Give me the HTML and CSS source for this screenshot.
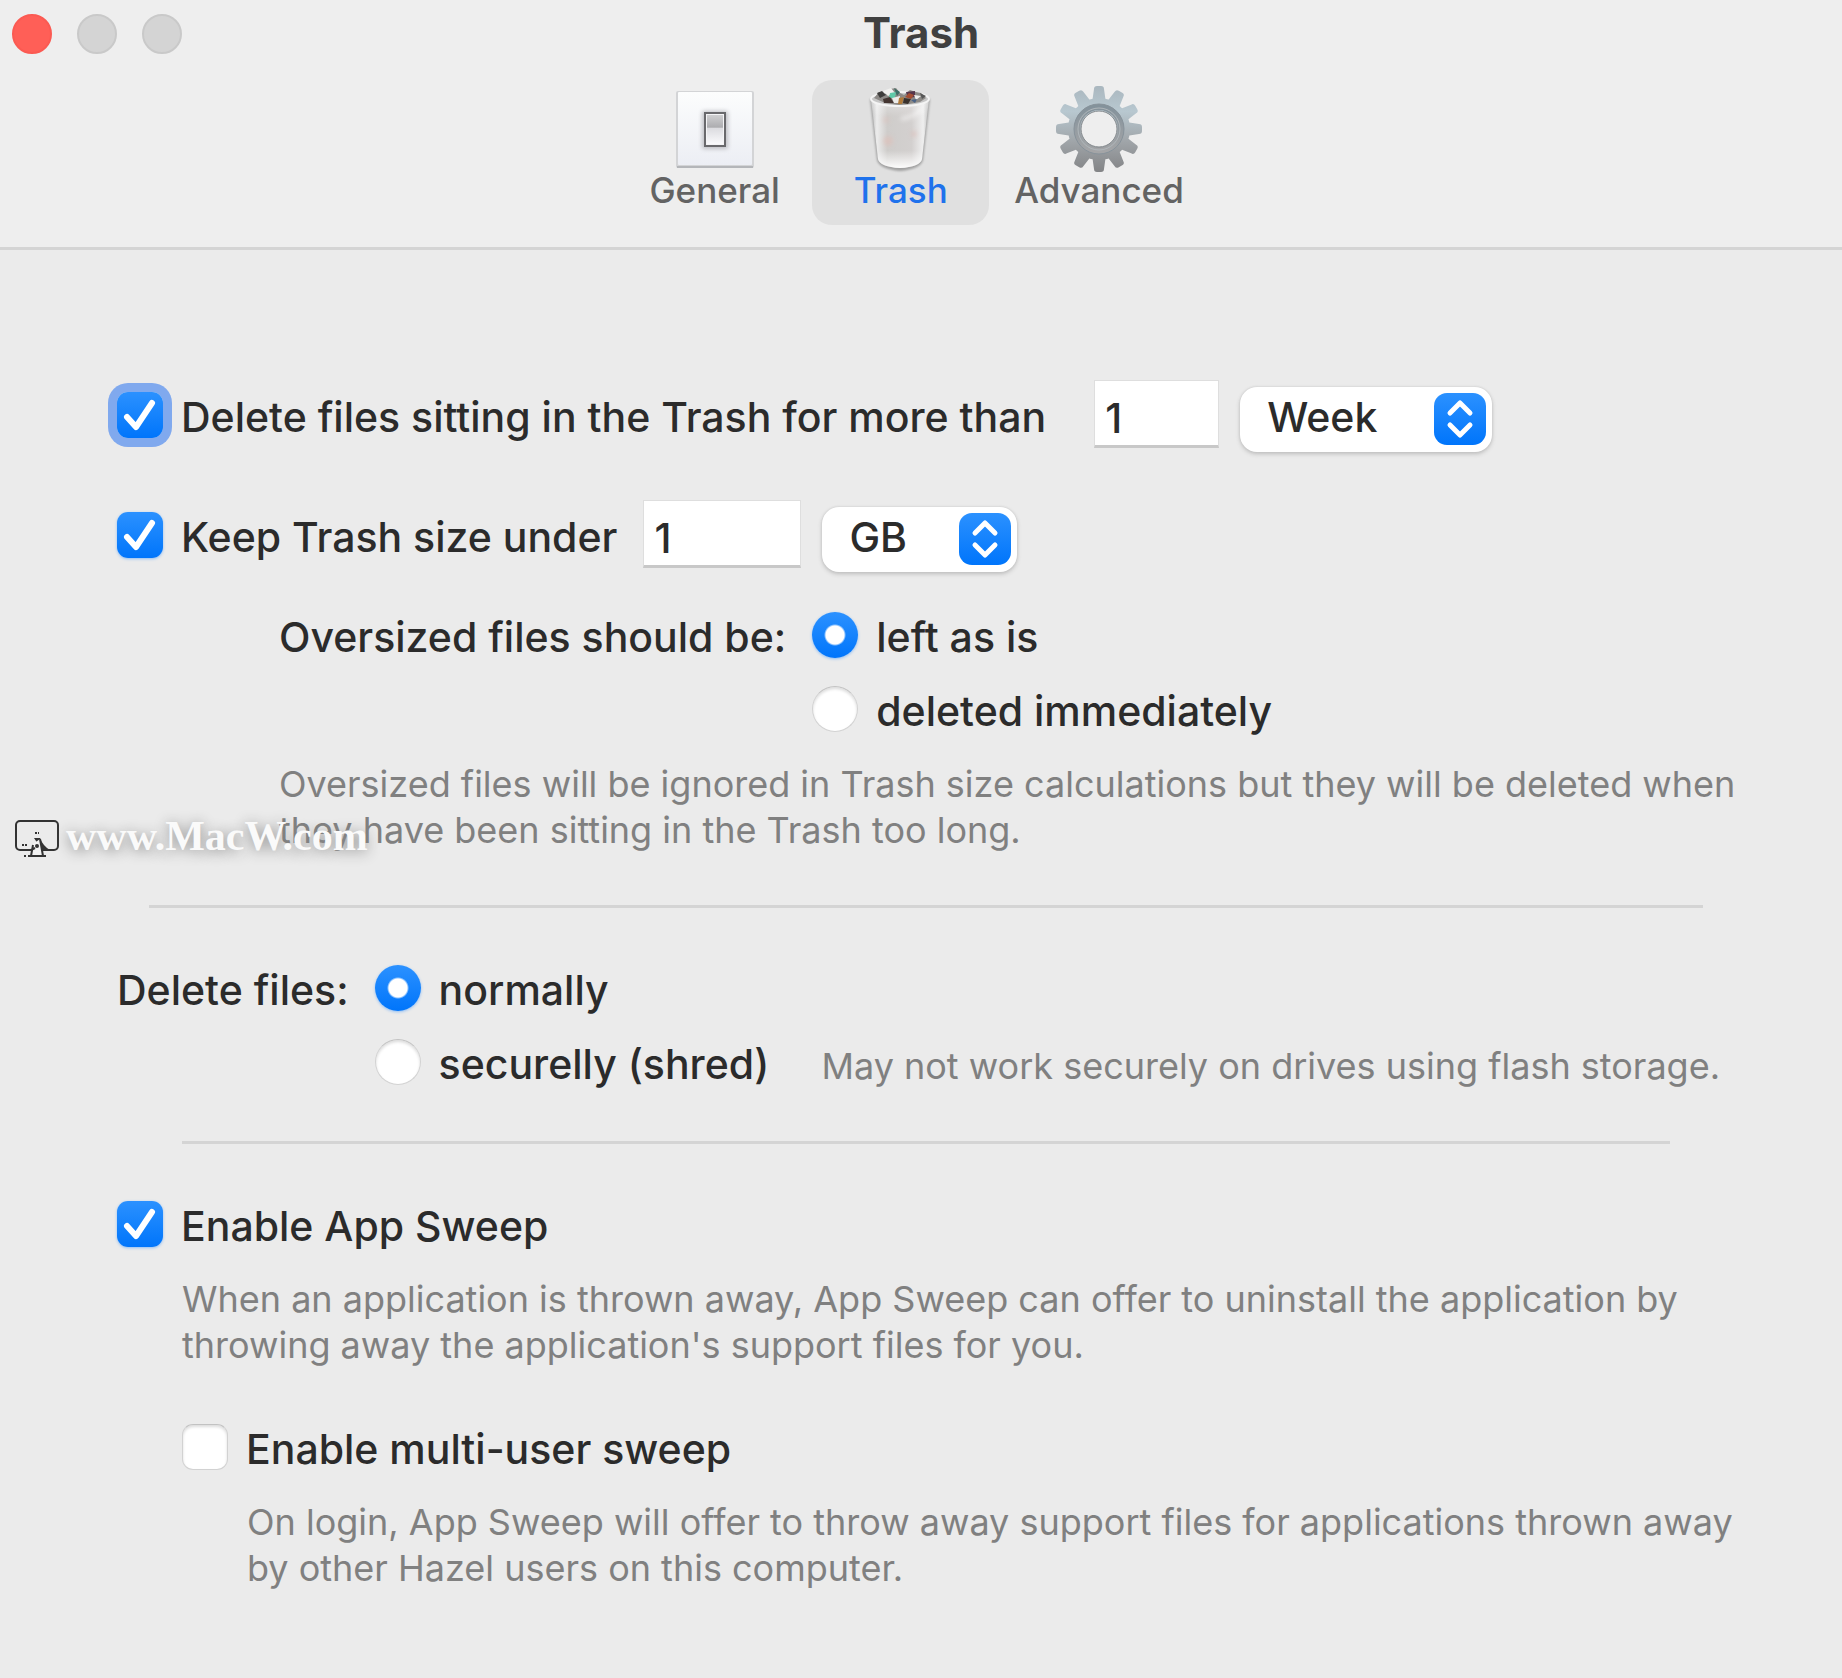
FILE: index.html
```
<!DOCTYPE html>
<html lang="en">
<head>
  <meta charset="UTF-8" />
  <meta name="viewport" content="width=device-width, initial-scale=1" />
  <title>Trash</title>
  <link rel="stylesheet" href="styles.css">
</head>

<body>
  <!-- Title bar and toolbar -->
  <header class="toolbar">
    <div class="window-buttons">
      <button type="button" class="light light-close" aria-label="Close"></button>
      <button type="button" class="light" aria-label="Minimize" disabled></button>
      <button type="button" class="light" aria-label="Zoom" disabled></button>
    </div>
    <h1 class="title">Trash</h1>
    <nav class="tabs">
      <button type="button" class="tab">
        <svg class="tab-icon" viewBox="0 0 88 88" aria-hidden="true">
          <defs>
            <linearGradient id="plate" x1="0" y1="0" x2="0" y2="1">
              <stop offset="0" stop-color="#fcfdfd" />
              <stop offset="1" stop-color="#eceef4" />
            </linearGradient>
            <linearGradient id="rocker" x1="0" y1="0" x2="0" y2="1">
              <stop offset="0" stop-color="#cfcfd1" />
              <stop offset="0.42" stop-color="#adadb0" />
              <stop offset="0.46" stop-color="#dcdce0" />
              <stop offset="1" stop-color="#fafafc" />
            </linearGradient>
            <filter id="soft" x="-50%" y="-50%" width="200%" height="200%">
              <feGaussianBlur stdDeviation="2" />
            </filter>
          </defs>
          <rect x="5" y="6" width="78" height="77" rx="2" fill="#d3d4d6" />
          <rect x="6" y="81" width="76" height="2" fill="#b4b6b9" />
          <rect x="7" y="7" width="74" height="73" rx="1" fill="url(#plate)" />
          <rect x="31" y="26" width="26" height="38" rx="2" fill="#bfc0c5" filter="url(#soft)" />
          <rect x="34" y="28" width="20" height="33" fill="#f4f4f6" stroke="#69696c" stroke-width="2" />
          <rect x="36" y="30" width="16" height="29" fill="url(#rocker)" />
        </svg>
        General
      </button>
      <button type="button" class="tab tab-active">
        <svg class="tab-icon" viewBox="0 0 88 88" aria-hidden="true">
          <defs>
            <linearGradient id="bin" x1="0" y1="0" x2="1" y2="0">
              <stop offset="0" stop-color="#b8b8b8" />
              <stop offset="0.1" stop-color="#ececec" />
              <stop offset="0.28" stop-color="#cfcdcb" />
              <stop offset="0.7" stop-color="#d3d0cf" />
              <stop offset="0.9" stop-color="#efefef" />
              <stop offset="1" stop-color="#bcbcbc" />
            </linearGradient>
            <linearGradient id="shine" x1="0" y1="0" x2="0" y2="1">
              <stop offset="0" stop-color="#fff" stop-opacity="0.4" />
              <stop offset="0.25" stop-color="#fff" stop-opacity="0" />
              <stop offset="0.75" stop-color="#fff" stop-opacity="0" />
              <stop offset="1" stop-color="#fff" stop-opacity="0.95" />
            </linearGradient>
            <filter id="binShadow" x="-20%" y="-20%" width="140%" height="140%">
              <feGaussianBlur stdDeviation="1" />
            </filter>
          </defs>
          <path d="M13 14L20 75Q22 84 43 86Q64 84 66 75L73 14Z" fill="#a0a0a0" filter="url(#binShadow)" />
          <path d="M14 14L21 74Q23 82 43 83Q63 82 65 74L72 14Z" fill="url(#bin)" />
          <path d="M14 14L21 74Q23 82 43 83Q63 82 65 74L72 14Z" fill="url(#shine)" />
          <ellipse cx="43" cy="14" rx="29" ry="7" fill="#c7c7c7" stroke="#f4f4f4" stroke-width="2" />
          <path d="M17 13L22 7L28 9L33 4L39 3L43 8L47 10L53 5L59 7L64 8L69 13L63 17L52 19L42 20L28 18Z" fill="#8d8a87" />
          <path d="M20 8L25 6L29 10L23 13Z" fill="#3e3d3c" />
          <path d="M26 6L34 3L38 8L31 11Z" fill="#f0f0ee" />
          <path d="M33 8L39 7L38 13L32 13Z" fill="#5fc9a8" />
          <path d="M37 3L43 7L40 11Z" fill="#3c6f66" />
          <path d="M26 14L33 12L37 18L27 18Z" fill="#443531" />
          <path d="M35 13L43 11L42 18L37 18Z" fill="#ecebe8" />
          <path d="M42 13L47 12L45 19L41 19Z" fill="#b07a39" />
          <path d="M49 7L58 6L58 12L51 13Z" fill="#56364b" />
          <path d="M52 8L57 10L54 14L48 12Z" fill="#a54e32" />
          <path d="M47 13L54 14L51 19L46 18Z" fill="#3a322d" />
          <path d="M57 10L64 11L59 15Z" fill="#efefed" />
          <path d="M63 8L69 11L65 14Z" fill="#575757" />
          <path d="M54 15L60 14L58 18Z" fill="#4a6285" />
          <g filter="url(#soft)" opacity="0.5">
            <circle cx="29" cy="35" r="3" fill="#dfbfb8" />
            <circle cx="57" cy="49" r="3" fill="#deb9b2" />
            <circle cx="31" cy="56" r="5" fill="#e3bcb4" />
            <path d="M44 34Q60 31 64 24" fill="none" stroke="#fff" stroke-width="4" />
          </g>
        </svg>
        Trash
      </button>
      <button type="button" class="tab">
        <svg class="tab-icon" viewBox="0 0 88 88" aria-hidden="true">
          <defs>
            <linearGradient id="steel" x1="0" y1="0" x2="0" y2="1">
              <stop offset="0" stop-color="#a9b6be" />
              <stop offset="0.3" stop-color="#b8c8d0" />
              <stop offset="0.65" stop-color="#9fa4a8" />
              <stop offset="1" stop-color="#828385" />
            </linearGradient>
            <linearGradient id="bevel" x1="0" y1="0" x2="0" y2="1">
              <stop offset="0" stop-color="#84929b" />
              <stop offset="1" stop-color="#a4a5a7" />
            </linearGradient>
            <path id="tooth" d="M37 18L39 4Q39 1 42 1H46Q49 1 49 4L51 18Z" />
            <clipPath id="gear">
              <circle cx="44" cy="44" r="31" />
              <use href="#tooth" />
              <use href="#tooth" transform="rotate(30 44 44)" />
              <use href="#tooth" transform="rotate(60 44 44)" />
              <use href="#tooth" transform="rotate(90 44 44)" />
              <use href="#tooth" transform="rotate(120 44 44)" />
              <use href="#tooth" transform="rotate(150 44 44)" />
              <use href="#tooth" transform="rotate(180 44 44)" />
              <use href="#tooth" transform="rotate(210 44 44)" />
              <use href="#tooth" transform="rotate(240 44 44)" />
              <use href="#tooth" transform="rotate(270 44 44)" />
              <use href="#tooth" transform="rotate(300 44 44)" />
              <use href="#tooth" transform="rotate(330 44 44)" />
            </clipPath>
          </defs>
          <rect width="88" height="88" fill="url(#steel)" clip-path="url(#gear)" />
          <circle cx="44" cy="44" r="22" fill="none" stroke="url(#bevel)" stroke-width="6" />
          <circle cx="44" cy="44" r="25" fill="none" stroke="#87929a" stroke-width="1" />
          <circle cx="44" cy="44" r="21" fill="none" stroke="#b0b7bb" stroke-width="1" />
          <circle cx="44" cy="44" r="18" fill="#eee" stroke="#84898d" stroke-width="1" />
        </svg>
        Advanced
      </button>
    </nav>
  </header>

  <main class="panel">
    <!-- Trash limits -->
    <div class="row">
      <label class="option" for="age-on">
        <input type="checkbox" id="age-on" class="check check-focused" checked>
        Delete files sitting in the Trash for more than
      </label>
      <input type="text" class="field field-age" value="1" aria-label="Age">
      <span class="popup popup-unit">
        <select aria-label="Age unit">
          <option>Day</option>
          <option selected>Week</option>
          <option>Month</option>
        </select>
        <svg class="arrows" viewBox="0 0 52 52" aria-hidden="true">
          <path d="M16 20L26 10L36 20M16 32L26 42L36 32" />
        </svg>
      </span>
    </div>

    <div class="row">
      <label class="option" for="size-on">
        <input type="checkbox" id="size-on" class="check" checked>
        Keep Trash size under
      </label>
      <input type="text" class="field field-size" value="1" aria-label="Size">
      <span class="popup popup-size">
        <select aria-label="Size unit">
          <option>MB</option>
          <option selected>GB</option>
        </select>
        <svg class="arrows" viewBox="0 0 52 52" aria-hidden="true">
          <path d="M16 20L26 10L36 20M16 32L26 42L36 32" />
        </svg>
      </span>
    </div>

    <div class="oversized">
      <div class="choices" role="radiogroup" aria-labelledby="oversized-label">
        <span id="oversized-label">Oversized files should be:</span>
        <div class="choice-list">
          <label class="option"><input type="radio" name="oversized" class="radio" checked>left as is</label>
          <label class="option"><input type="radio" name="oversized" class="radio">deleted immediately</label>
        </div>
      </div>
      <p class="hint">Oversized files will be ignored in Trash size calculations but they will be deleted when they have been sitting in the Trash too long.</p>
    </div>

    <hr class="divider">

    <!-- Delete mode -->
    <div class="choices" role="radiogroup" aria-labelledby="delete-label">
      <span id="delete-label">Delete files:</span>
      <div class="choice-list">
        <label class="option"><input type="radio" name="delete" class="radio" checked>normally</label>
        <div class="choice-line">
          <label class="option"><input type="radio" name="delete" class="radio">securelly (shred)</label>
          <span class="note">May not work securely on drives using flash storage.</span>
        </div>
      </div>
    </div>

    <hr class="divider divider-short">

    <!-- App Sweep -->
    <label class="option" for="sweep-on">
      <input type="checkbox" id="sweep-on" class="check" checked>
      Enable App Sweep
    </label>
    <div class="nested">
      <p class="hint">When an application is thrown away, App Sweep can offer to uninstall the application by throwing away the application's support files for you.</p>
      <label class="option option-multi" for="multi-on">
        <input type="checkbox" id="multi-on" class="check">
        Enable multi-user sweep
      </label>
      <div class="nested">
        <p class="hint">On login, App Sweep will offer to throw away support files for applications thrown away by other Hazel users on this computer.</p>
      </div>
    </div>
  </main>

  <div class="watermark">
    <svg class="watermark-icon" viewBox="0 0 46 40" aria-hidden="true">
      <rect x="2" y="2" width="42" height="29" rx="4" fill="none" stroke="#333" stroke-width="2" />
      <path d="M20 19H26Q29 27 36 31H28Z" fill="#333" />
      <path d="M19 25L26 20L29 37H17Z" fill="#f2f2f2" />
      <path d="M19 26L17 37M26 20L29 37M14 37H32M10 37H12M17 31L21 29" stroke="#333" stroke-width="2" fill="none" />
      <circle cx="23" cy="27" r="2" fill="#333" />
      <path d="M21 14H25M8 26H14" stroke="#333" stroke-width="2" stroke-dasharray="2 1" />
    </svg>
    <span>www.MacW.com</span>
  </div>
</body>
</html>
```
FILE: styles.css
```
* {
  box-sizing: border-box;
}

body {
  margin: 0;
  min-height: 100vh;
  position: relative;
  background: #ebebeb;
  color: #2b2b2b;
  font-family: Inter, "Liberation Sans", sans-serif;
  font-size: 41px;
  font-weight: 500;
  line-height: 50px;
}

button,
input,
select {
  font: inherit;
  color: inherit;
  margin: 0;
}

/* Title bar */
.toolbar {
  display: grid;
  grid-template-columns: 1fr auto 1fr;
  background: #eee;
  border-bottom: 3px solid #d4d4d4;
  padding: 8px 12px 22px;
}

.window-buttons {
  display: flex;
  align-items: flex-end;
  gap: 25px;
  padding-bottom: 4px;
}

.light {
  width: 40px;
  height: 40px;
  padding: 0;
  border: 2px solid #c9c9c9;
  border-radius: 50%;
  background: #d4d4d4;
}

.light-close {
  border-color: #fb5a52;
  background: #ff5f57;
}

.title {
  margin: 0;
  font-size: 42px;
  font-weight: 700;
  line-height: 50px;
  color: #404040;
}

.tabs {
  grid-column: 1 / -1;
  display: flex;
  justify-content: center;
  gap: 9px;
  margin-top: 22px;
  padding-right: 16px;
}

.tab {
  display: flex;
  flex-direction: column;
  align-items: center;
  min-width: 177px;
  height: 145px;
  padding: 5px 16px;
  border: 0;
  border-radius: 20px;
  background: none;
  font-size: 35px;
  line-height: 40px;
  color: #636363;
}

.tab-active {
  background: #e0e0e0;
  color: #1f72ec;
}

.tab-icon {
  width: 88px;
  height: 88px;
  margin-bottom: -3px;
}

/* Settings */
.panel {
  padding: 130px 105px 70px 117px;
}

.row {
  display: flex;
  align-items: center;
  height: 72px;
  margin-bottom: 48px;
}

.row + .row {
  margin-bottom: 40px;
}

.row .option {
  padding-top: 1px;
}

.option {
  display: flex;
  align-items: center;
  gap: 18px;
  white-space: nowrap;
}

.check,
.radio {
  appearance: none;
  flex: none;
  width: 46px;
  height: 46px;
  margin-bottom: 4px;
  border: 1px solid #d2d2d2;
  border-top-color: #c2c2c2;
  background: #fff;
  box-shadow: inset 0 2px 3px #ddd;
}

.check {
  border-radius: 11px;
}

.radio {
  border-radius: 50%;
}

.check:checked {
  border: 0;
  background: url("data:image/svg+xml,%3Csvg xmlns='http://www.w3.org/2000/svg' viewBox='0 0 46 46'%3E%3Cpath d='M10 25L19 35L35 11' fill='none' stroke='white' stroke-width='6' stroke-linecap='round' stroke-linejoin='round'/%3E%3C/svg%3E"), linear-gradient(#2b91ff, #0075fb);
  box-shadow: 0 1px 3px #8dbdf5;
}

.check.check-focused {
  box-shadow: 0 0 0 9px #80a9ee;
}

.radio:checked {
  border: 0;
  background: radial-gradient(circle, #fff 9px, transparent 11px), linear-gradient(#2b91ff, #0075fb);
  box-shadow: 0 1px 3px #8dbdf5;
}

.field {
  align-self: flex-start;
  height: 68px;
  padding: 9px 10px 0;
  border: 1px solid #dedede;
  border-bottom: 3px solid #c8c8c8;
  border-radius: 0;
  background: #fff;
}

.field-age {
  width: 125px;
  margin-left: 48px;
}

.field-size {
  width: 158px;
  margin-left: 26px;
}

.popup {
  position: relative;
  align-self: flex-end;
  margin-left: 21px;
}

.popup select {
  appearance: none;
  display: block;
  width: 100%;
  height: 65px;
  padding: 0 68px 5px 27px;
  border: 0;
  border-radius: 17px;
  background: #fff;
  box-shadow: 0 0 2px #c4c4c4, 0 2px 4px #bdbdbd;
}

.popup-unit {
  width: 252px;
}

.popup-size {
  width: 195px;
}

.arrows {
  position: absolute;
  top: 6px;
  right: 6px;
  width: 52px;
  height: 52px;
  border-radius: 13px;
  background: linear-gradient(#2b91ff, #0075fb);
  fill: none;
  stroke: #fff;
  stroke-width: 5;
  stroke-linecap: round;
  stroke-linejoin: round;
  pointer-events: none;
}

.oversized {
  padding-left: 162px;
}

.choices {
  display: flex;
  gap: 26px;
}

.choice-list {
  display: flex;
  flex-direction: column;
  gap: 24px;
}

.choice-line {
  display: flex;
  align-items: flex-end;
  gap: 52px;
}

.hint {
  margin: 25px 0 0;
}

.hint,
.note {
  font-size: 36px;
  font-weight: 400;
  line-height: 46px;
  color: #808080;
}

.note {
  white-space: nowrap;
}

.divider {
  height: 3px;
  margin: 52px 34px 57px 32px;
  border: 0;
  background: #d4d4d4;
}

.divider-short {
  margin: 52px 67px 57px 65px;
}

.nested {
  padding-left: 65px;
}

.option-multi {
  margin-top: 56px;
}

/* Site mark */
.watermark {
  position: absolute;
  top: 811px;
  left: 14px;
  display: flex;
  align-items: flex-end;
  gap: 6px;
  font-family: "Liberation Serif", serif;
  font-size: 42px;
  font-weight: 700;
  color: #fafafa;
  text-shadow: 0 2px 14px #888;
}

.watermark-icon {
  width: 46px;
  height: 40px;
  margin-bottom: 2px;
}
```
